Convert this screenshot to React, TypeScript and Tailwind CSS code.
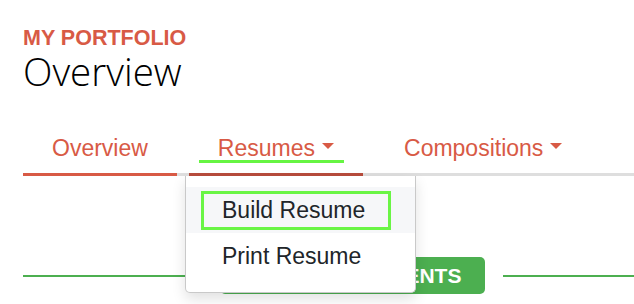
import React from 'react';

const RED = 'text-[#d85a45]';

const Caret = () => (
  <span className="ml-[7px] mb-[4px] inline-block h-0 w-0 border-x-[6.5px] border-t-[6px] border-x-transparent border-t-[#d85a45]" />
);

type TabProps = {
  label: string;
  hasCaret?: boolean;
  active?: boolean;
  focused?: boolean;
};

const Tab: React.FC<TabProps> = ({ label, hasCaret = false, active = false, focused = false }) => {
  const lineColor = active ? 'border-b-[#b84c3c]' : label === 'Overview' ? 'border-b-[#d85a45]' : 'border-b-transparent';
  return (
    <div className={`-mb-[3px] border-b-[3px] pb-[10px] ${lineColor} ${hasCaret ? 'pl-[10px] pr-[19px]' : 'px-[10px]'}`}>
      <span
        className={`flex items-center border-b-[3px] text-[23px] leading-[24px] ${RED} ${
          focused ? 'border-b-[#66f542]' : 'border-b-transparent'
        } ${hasCaret ? 'pl-[19px] pr-[10px]' : 'px-[19px]'}`}
      >
        {label}
        {hasCaret && <Caret />}
      </span>
    </div>
  );
};

const MenuItem: React.FC<{ label: string; highlighted?: boolean }> = ({ label, highlighted = false }) => (
  <div className={`h-[46px] pl-[15px] pr-[24px] pt-[4px] ${highlighted ? 'bg-[#f6f7f9]' : ''}`}>
    <div
      className={`border-[3px] pl-[18px] text-[23px] leading-[33px] text-[#212529] ${
        highlighted ? 'border-[#6af545]' : 'border-transparent'
      }`}
    >
      {label}
    </div>
  </div>
);

export default function App() {
  return (
    <div
      className="relative h-[304px] w-[634px] overflow-hidden bg-white"
      style={{ fontFamily: '"Liberation Sans", Arial, sans-serif' }}
    >
      <div className="pl-[23px] pt-[26px]">
        <div className={`text-[21.5px] font-bold leading-[24px] ${RED}`}>MY PORTFOLIO</div>
        <h1
          className="text-[38.5px] font-light leading-[42px] text-black"
          style={{ fontFamily: '"Open Sans", "Liberation Sans", sans-serif' }}
        >
          Overview
        </h1>

        <nav className="mt-[44px] flex gap-3 border-b-[3px] border-[#dedede]">
          <Tab label="Overview" />
          <Tab label="Resumes" hasCaret active focused />
          <Tab label="Compositions" hasCaret />
        </nav>

        <div className="mt-[81px] flex items-center gap-[18px]">
          <div className="h-[2px] w-[179px] bg-[#4caf50]" />
          <button className="h-[37px] rounded-[5px] bg-[#4caf50] px-[24px] text-[21px] font-bold leading-[37px] text-white">
            ADD ACHIEVEMENTS
          </button>
          <div className="h-[2px] flex-1 bg-[#4caf50]" />
        </div>
      </div>

      <div className="absolute left-[185px] top-[176px] w-[231px] rounded-b-[5px] border-x border-b border-[#c9c9c9] bg-white pb-[13px] pt-[11px] shadow-[0_6px_14px_rgba(0,0,0,0.12)]">
        <MenuItem label="Build Resume" highlighted />
        <MenuItem label="Print Resume" />
      </div>
    </div>
  );
}
